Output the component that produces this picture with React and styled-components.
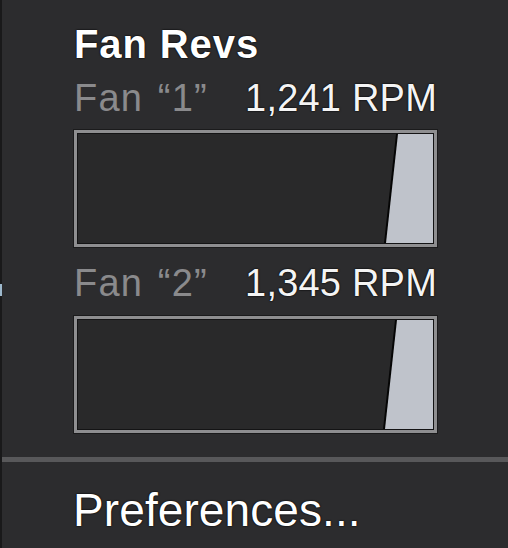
import React from "react";
import styled, { createGlobalStyle } from "styled-components";

const Global = createGlobalStyle`
  html, body { margin: 0; padding: 0; background: #2c2c2e; }
  body { font-family: "Liberation Sans", Arial, sans-serif; }
  #root { width: 508px; height: 548px; overflow: hidden; }
`;

const Frame = styled.div`
  display: flex;
  width: 508px;
  height: 548px;
  background: #2c2c2e;
`;

const EdgeStrip = styled.div`
  flex: 0 0 2px;
  background: linear-gradient(
    to bottom,
    #19191a 0,
    #19191a 284px,
    #9db8cc 284px,
    #9db8cc 296px,
    #19191a 296px
  );
`;

const Panel = styled.div`
  flex: 1;
  display: flex;
  flex-direction: column;
  padding-top: 24px;
`;

const Section = styled.div`
  display: flex;
  flex-direction: column;
  padding-left: 72px;
  width: 363px;
`;

const Heading = styled.div`
  font-size: 40px;
  line-height: 40px;
  font-weight: 700;
  color: #ffffff;
  letter-spacing: 0.9px;
  text-shadow: 0 0 2px #000, 0 0 1px #000;
`;

const FanRow = styled.div`
  display: flex;
  justify-content: space-between;
  align-items: baseline;
  margin-top: ${(p) => p.$top}px;
  font-size: 38px;
  line-height: 38px;
`;

const FanLabel = styled.span`
  color: #8a8a8c;
  letter-spacing: 1.2px;
  word-spacing: 3px;
`;

const FanValue = styled.span`
  color: #f4f4f4;
  letter-spacing: 0.2px;
  text-shadow: 0 0 2px #000, 0 0 1px #000;
`;

const Meter = styled.div`
  margin-top: ${(p) => p.$top}px;
  height: 117px;
  box-sizing: border-box;
  border: 3px solid #8e8e90;
  background: #29292a;
  box-shadow: 0 0 0 1px #1b1b1c, inset 0 0 0 1px #141415;
  display: flex;
  justify-content: flex-end;
  padding: 1px 1px 1px 0;
`;

const FillEdge = styled.div`
  display: flex;
  height: 100%;
  filter: drop-shadow(-1.5px 0 0 #050505);
`;

const Fill = styled.div`
  height: 100%;
  background: #bfc3cb;
  clip-path: polygon(${(p) => p.$slant}px 0, 100% 0, 100% 100%, 0 100%);
`;

const Separator = styled.div`
  margin-top: 24px;
  height: 5px;
  background: #58585a;
`;

const MenuItem = styled.div`
  margin-top: 25px;
  padding-left: 71px;
  font-size: 46px;
  line-height: 46px;
  color: #ffffff;
  letter-spacing: 0.1px;
  text-shadow: 0 0 2px #000, 0 0 1px #000;
`;

const fans = [
  { id: "1", rpm: "1,241", fill: 47, slant: 12 },
  { id: "2", rpm: "1,345", fill: 48, slant: 12 },
];

export default function App() {
  return (
    <>
      <Global />
      <Frame>
        <EdgeStrip />
        <Panel>
          <Section>
            <Heading>Fan Revs</Heading>
            {fans.map((f, i) => (
              <React.Fragment key={f.id}>
                <FanRow $top={i === 0 ? 15 : 17}>
                  <FanLabel>Fan “{f.id}”</FanLabel>
                  <FanValue>{f.rpm} RPM</FanValue>
                </FanRow>
                <Meter $top={i === 0 ? 13 : 14}>
                  <FillEdge>
                    <Fill $slant={f.slant} style={{ width: f.fill }} />
                  </FillEdge>
                </Meter>
              </React.Fragment>
            ))}
          </Section>
          <Separator />
          <MenuItem>Preferences...</MenuItem>
        </Panel>
      </Frame>
    </>
  );
}
